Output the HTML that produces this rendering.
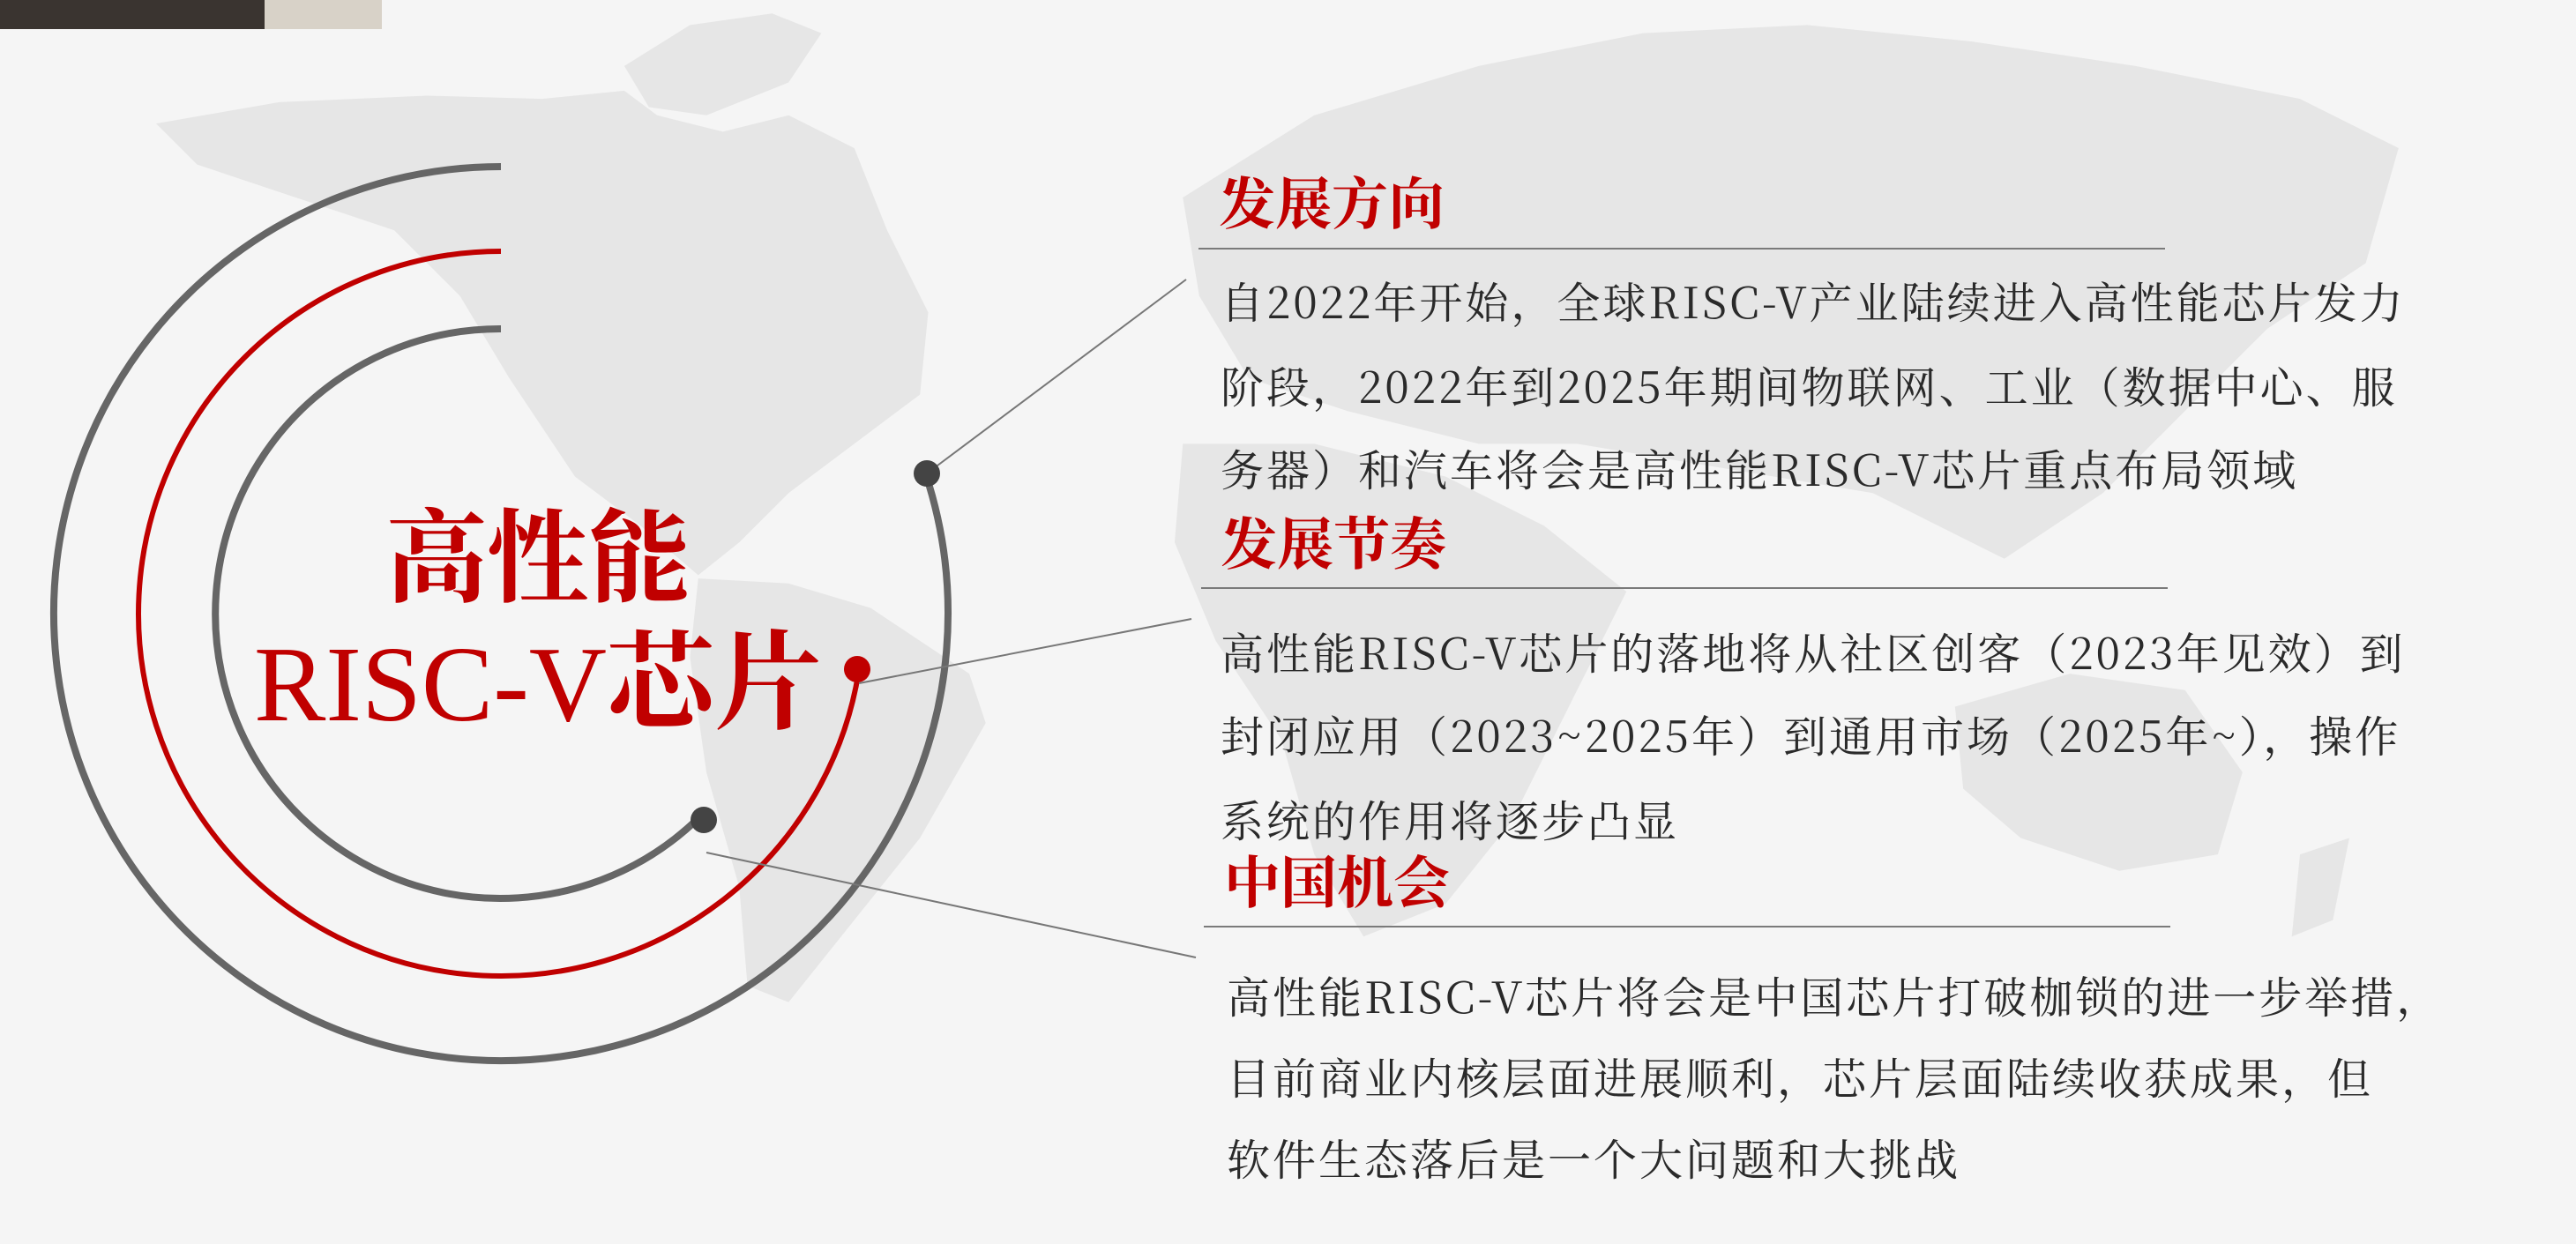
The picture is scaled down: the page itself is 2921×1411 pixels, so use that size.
<!DOCTYPE html>
<html><head><meta charset="utf-8"><style>
body{margin:0;width:2921px;height:1411px;background:#f5f5f5;position:relative;overflow:hidden;font-family:"Liberation Serif","Noto Serif CJK SC",serif}
.h{position:absolute;color:#c00000;font-weight:bold;font-size:64px;line-height:64px;font-family:"Noto Serif CJK SC","Noto Sans CJK SC",serif;white-space:nowrap}
.b{position:absolute;color:#2a2a2a;font-size:49px;line-height:49px;letter-spacing:3px;font-family:"Noto Serif CJK SC",serif;white-space:nowrap}
.r{position:absolute;height:2px;background:#7a7a7a}
</style></head><body>
<svg width="2921" height="1411" viewBox="0 0 1568 757" style="position:absolute;left:0;top:0" fill="#e6e6e6">
<path d="M95,75 L170,62 260,58 330,60 380,55 400,70 440,80 480,70 520,90 540,140 565,190 560,240 520,270 480,300 450,330 425,350 390,320 350,290 310,230 280,180 240,140 180,120 120,100Z"/>
<path d="M380,40 L420,15 470,8 500,20 480,50 430,70 395,65Z"/>
<path d="M425,352 L480,355 530,370 590,410 600,440 560,510 520,560 480,610 455,600 450,540 430,470 420,400Z"/>
<path d="M720,120 L800,70 900,40 1000,20 1100,15 1200,25 1300,40 1400,60 1460,90 1440,160 1380,200 1320,260 1280,300 1220,340 1180,320 1140,300 1080,290 1020,280 960,270 900,270 820,250 760,230 730,180Z"/>
<path d="M720,270 L800,270 880,290 940,320 990,360 960,420 920,500 880,550 830,570 800,520 780,450 740,390 715,330Z"/>
<path d="M1190,430 L1260,410 1330,420 1365,470 1350,520 1290,530 1230,510 1195,480Z"/>
<path d="M1400,520 L1430,510 1420,560 1395,570Z"/>
</svg>
<div style="position:absolute;left:0;top:0;width:300px;height:33px;background:#3a3430"></div>
<div style="position:absolute;left:300px;top:0;width:133px;height:33px;background:#d8d2c8"></div>
<svg width="2921" height="1411" style="position:absolute;left:0;top:0" fill="none">
<path d="M568,189 A507,507 0 1 0 1049.6,537.6" stroke="#666" stroke-width="8"/>
<path d="M568,285 A411,411 0 1 0 974,760" stroke="#c00000" stroke-width="6"/>
<path d="M568,373 A323,323 0 1 0 794,926" stroke="#666" stroke-width="8"/>
<line x1="1051" y1="537" x2="1345" y2="317" stroke="#777" stroke-width="2"/>
<line x1="974" y1="775" x2="1351" y2="702" stroke="#777" stroke-width="2"/>
<line x1="801" y1="967" x2="1356" y2="1086" stroke="#777" stroke-width="2"/>
<circle cx="1051" cy="537" r="15" fill="#444"/>
<circle cx="972" cy="759" r="15" fill="#c00000"/>
<circle cx="798" cy="930" r="15" fill="#444"/>
</svg>
<div style="position:absolute;left:300px;top:560px;width:620px;text-align:center;color:#c00000;font-weight:bold;font-size:115px;line-height:128px;font-family:'Noto Serif CJK SC',serif">高性能</div>
<div style="position:absolute;left:250px;top:700px;width:720px;text-align:center;color:#c00000;font-size:122px;line-height:130px;white-space:nowrap"><span style="font-family:'Liberation Serif',serif">RISC-V</span><span style="font-family:'Noto Serif CJK SC',serif;font-weight:bold">芯片</span></div>

<div class="h" style="left:1382px;top:195px">发展方向</div>
<div class="r" style="left:1359px;top:281px;width:1096px"></div>
<div class="b" style="left:1384px;top:317px">自2022年开始，全球RISC-V产业陆续进入高性能芯片发力</div>
<div class="b" style="left:1384px;top:413px">阶段，2022年到2025年期间物联网、工业（数据中心、服</div>
<div class="b" style="left:1384px;top:507px">务器）和汽车将会是高性能RISC-V芯片重点布局领域</div>

<div class="h" style="left:1384px;top:581px">发展节奏</div>
<div class="r" style="left:1362px;top:666px;width:1096px"></div>
<div class="b" style="left:1384px;top:715px">高性能RISC-V芯片的落地将从社区创客（2023年见效）到</div>
<div class="b" style="left:1384px;top:809px">封闭应用（2023~2025年）到通用市场（2025年~），操作</div>
<div class="b" style="left:1384px;top:905px">系统的作用将逐步凸显</div>

<div class="h" style="left:1388px;top:965px">中国机会</div>
<div class="r" style="left:1365px;top:1050px;width:1096px"></div>
<div class="b" style="left:1391px;top:1105px">高性能RISC-V芯片将会是中国芯片打破枷锁的进一步举措，</div>
<div class="b" style="left:1391px;top:1197px">目前商业内核层面进展顺利，芯片层面陆续收获成果，但</div>
<div class="b" style="left:1391px;top:1289px">软件生态落后是一个大问题和大挑战</div>
</body></html>
